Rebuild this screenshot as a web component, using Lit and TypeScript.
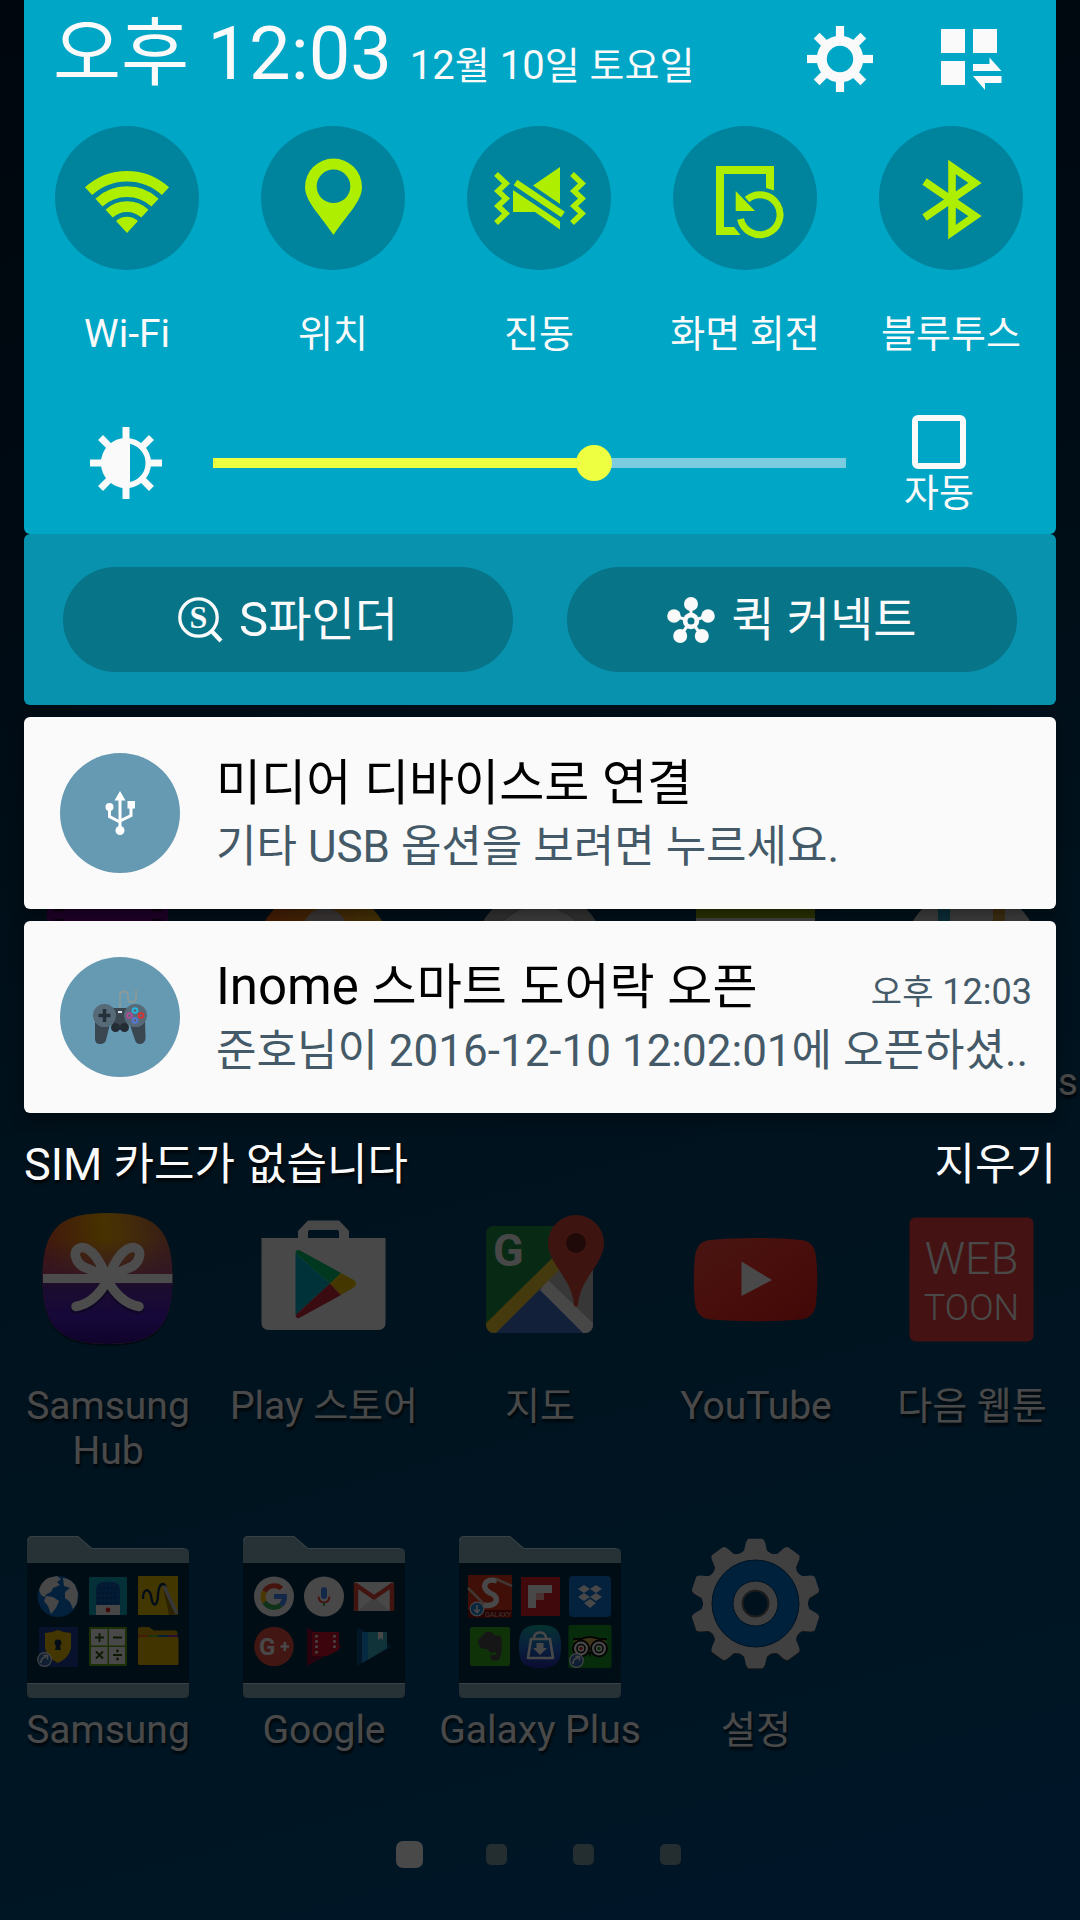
import { LitElement, html, svg, css } from "lit";
import type { SVGTemplateResult, TemplateResult } from "lit";
import { customElement, state } from "lit/decorators.js";
import { styleMap } from "lit/directives/style-map.js";

/** Wraps each Hangul run so it can be sized apart from the Latin text. */
const mixed = (text: string) =>
  text.split(/([가-힣]+)/).filter(Boolean).map((part) =>
    /[가-힣]/.test(part) ? html`<span class="ko">${part}</span>` : part
  );

const LIME = "#aeee00";

/* ---------- quick settings ---------- */

const fan = (r: number) =>
  `M${72 - 0.677 * r} ${107 - 0.736 * r}A${r} ${r} 0 0 1 ${72 + 0.677 * r} ${107 - 0.736 * r}`;

const wifiIcon = svg`
  <g fill="none" stroke=${LIME} stroke-width="10.6">
    <path d=${fan(56.8)} /><path d=${fan(41.4)} /><path d=${fan(26.4)} />
  </g>
  <path fill=${LIME} d="M72 107L61 95A16.3 16.3 0 0 1 83 95Z" />`;

const pinIcon = svg`
  <path fill=${LIME} fill-rule="evenodd"
    d="M72.500 109C61 91 44 76 44 61A28.500 28.500 0 0 1 101 61C101 76 84 91 72.500 109ZM72.500 43.500A16.800 16.800 0 1 0 72.500 77.100A16.800 16.800 0 1 0 72.500 43.500Z" />`;

const vibrateIcon = svg`
  <g fill="none" stroke=${LIME} stroke-width="5.500">
    <path d="M29 48L39 57.500L31 65L39 72.500L31 80L39 87.500L29 97" />
    <path d="M105 48L115 57.500L107 65L115 72.500L107 80L115 87.500L105 97" />
    <path d="M48.500 56.500L96 88.500" stroke-width="6.500" />
  </g>
  <path fill=${LIME} d="M93 41V78L66 59.500ZM46 64V86H68L93 103.500V95.500Z" />`;

const rotateIcon = svg`
  <path fill=${LIME} d="M43 40H101V64.500L93 62V48H51V101H61L67.500 109H43ZM62.700 65V85H82Z" />
  <path fill="none" stroke=${LIME} stroke-width="7" d="M74 73.500A20 20 0 1 1 67.500 93" />`;

const bluetoothIcon = svg`
  <path fill="none" stroke=${LIME} stroke-width="7.600"
    d="M45.500 55.500L96 90L73 106V41L96 57L45.500 91.500" />`;

/* ---------- launcher icons, 162 x 162 ---------- */

const gearPath = (() => {
  const at = (r: number, deg: number) => {
    const a = ((deg - 90) * Math.PI) / 180;
    return `${(80.5 + r * Math.cos(a)).toFixed(1)} ${(67.5 + r * Math.sin(a)).toFixed(1)}`;
  };
  const pts: string[] = [];
  for (let k = 0; k < 10; k++) {
    const a = k * 36;
    pts.push(at(51, a - 16), at(53, a - 11), at(61.5, a - 7.5), at(63.5, a - 6));
    pts.push(at(63.5, a + 6), at(61.5, a + 7.5), at(53, a + 11), at(51, a + 16));
  }
  return `M${pts.join("L")}Z`;
})();

const squircle = "M80.500 1C128 1 145.500 16 145.500 66.500C145.500 116 128 132 80.500 132C33 132 15.500 116 15.500 66.500C15.500 16 33 1 80.500 1Z";

const hubIcon = svg`
  <defs>
    <linearGradient id="hubTop" x1="0" x2="1" y1="0.100" y2="0">
      <stop offset="0" stop-color="#d8502c" /><stop offset="0.450" stop-color="#f0a400" />
      <stop offset="0.600" stop-color="#e89a18" /><stop offset="1" stop-color="#b45c50" />
    </linearGradient>
    <linearGradient id="hubFade" x1="0" x2="0" y1="0" y2="1">
      <stop offset="0.200" stop-color="#a03ca0" stop-opacity="0" /><stop offset="0.470" stop-color="#a04088" stop-opacity="0.750" />
      <stop offset="0.550" stop-color="#5c2c98" /><stop offset="0.800" stop-color="#4a1cc0" /><stop offset="1" stop-color="#340c90" />
    </linearGradient>
  </defs>
  <path d=${squircle} fill="#001020" opacity="0.600" transform="translate(0 2)" />
  <path d=${squircle} fill="url(#hubTop)" /><path d=${squircle} fill="url(#hubFade)" />
  <path d="M16 62H145.300V71H16Z" fill="#fff" />
  <g fill="none" stroke-linecap="round" stroke-linejoin="round">
    <g stroke="#20104c" stroke-opacity="0.500" stroke-width="11" transform="translate(0 2)">
      <path d="M80.500 68C72 84 62 92 49 94.500" /><path d="M80.500 68C89 84 99 92 112 94.500" />
    </g>
    <g stroke="#fff" stroke-width="9.500">
      <path d="M80.500 68C74 50 64 34 54 35.500C44 38 49 50 55 54C64 59 74 60 80.500 68Z" />
      <path d="M80.500 68C87 50 97 34 107 35.500C117 38 112 50 106 54C97 59 87 60 80.500 68Z" />
      <path d="M80.500 68C72 84 62 92 49 94.500" /><path d="M80.500 68C89 84 99 92 112 94.500" />
    </g>
  </g>`;

const playIcon = svg`
  <path fill="#f2f2f2" fill-rule="evenodd"
    d="M55 26V19L65 8.500H96L106 19V26H142.500V111Q142.500 118 135 118H26Q18.500 118 18.500 111V26ZM65 26H96V20Q96 18 94 18H67Q65 18 65 20Z" />
  <path fill="#00a9c4" d="M52.500 41V103L87 71.500Z" />
  <path fill="#00b868" d="M52.500 41Q53 36 58 39L98 61L87 71.500Z" />
  <path fill="#c22a3c" d="M52.500 103Q53 108 58 105L98 83L87 71.500Z" />
  <path fill="#e8b800" d="M98 61L110 67.500Q116 71.500 110 76L98 83L87 71.500Z" />`;

const mapsIcon = svg`
  <defs><clipPath id="mapClip"><rect x="27" y="14" width="107" height="107" rx="8" /></clipPath></defs>
  <g clip-path="url(#mapClip)">
    <rect x="27" y="14" width="107" height="107" fill="#1c8c48" />
    <path d="M81 64L134 14V121H81Z" fill="#b8b8b8" />
    <path d="M81 74L130 121H30Z" fill="#3f6cc4" />
    <path d="M81 78L89 68L140 117L128 125Z" fill="#eee" />
    <path d="M20 118L124 16L132 26L34 124Z" fill="#e8c030" />
    <path d="M27 14H110L27 96Z" fill="#1c8c48" />
    <path d="M27 96L110 14H122L27 109Z" fill="#1c8c48" />
  </g>
  <text class="glyph" x="34" y="54" font-size="45" font-weight="700" fill="#eee">G</text>
  <path fill="#d0453a" d="M117 3A28 28 0 0 1 145 31C145 52 121 66 119 93Q117 97 115 93C113 66 89 52 89 31A28 28 0 0 1 117 3Z" />
  <circle cx="117" cy="31" r="10" fill="#6c2420" />`;

const youtubeIcon = svg`
  <defs><linearGradient id="yt" x1="0" y1="0" x2="1" y2="1">
    <stop offset="0" stop-color="#f0483c" /><stop offset="0.500" stop-color="#f03028" /><stop offset="1" stop-color="#d81c18" />
  </linearGradient></defs>
  <path fill="url(#yt)" d="M80.500 26Q108 26 126 28Q139 29 141 44Q143.500 68 141 92Q139 106 126 107.500Q80 111 35 107.500Q22 106 20 92Q17.500 68 20 44Q22 29 35 28Q53 26 80.500 26Z" />
  <path fill="#f4f4f4" d="M66.500 49.500V84L97 68Z" />`;

const webtoonIcon = svg`
  <rect x="18.500" y="5.500" width="124" height="124" rx="6" fill="#e33c3c" />
  <text class="glyph" x="80.500" y="62" font-size="45" font-weight="300" text-anchor="middle" fill="#f4f4f4">WEB</text>
  <text class="glyph" x="80.500" y="108" font-size="36" font-weight="300" text-anchor="middle" fill="#f4f4f4">TOON</text>`;

const settingsIcon = svg`
  <path d=${gearPath} fill="#555" stroke="#555" stroke-width="3" stroke-linejoin="round" transform="translate(0 1)" />
  <path d=${gearPath} fill="#d8d8d8" stroke="#d8d8d8" stroke-width="3" stroke-linejoin="round" />
  <circle cx="80.500" cy="67.500" r="43.500" fill="#0070c8" stroke="#003c70" />
  <circle cx="80.500" cy="67.500" r="22.500" fill="#d8d8d8" stroke="#003c70" />
  <circle cx="80.500" cy="67.500" r="13" fill="#003a66" stroke="#666" stroke-width="2" />`;

const folder = (inner: SVGTemplateResult) => svg`
  <path d="M0 27H162V147H0Z" fill="#001014" fill-opacity="0.450" />
  <path d="M0 27V5Q0 0 5 0H51L65 12H157Q162 12 162 17V27Z" fill="#82a8b8" />
  <path d="M0 148H162V157Q162 162 157 162H5Q0 162 0 157Z" fill="#82a8b8" />
  <path d="M1 5Q1 0.500 5 0.500H51L65 12.500H157M0 147.500H162" fill="none" stroke="#c0d8e0" />
  ${inner}`;

const badge = (x: number, y: number, color: string) => svg`
  <circle cx=${x} cy=${y} r="6.800" fill=${color} stroke="#e8e8e8" stroke-width="1.200" />`;

const samsungFolder = folder(svg`
  <circle cx="31" cy="60.500" r="20.500" fill="#0a70c8" />
  <g fill="#eee">
    <path d="M12 54Q14 46 21 42L30 40L34 43L30 46L33 49L26 52L24 56L20 58L17 61L14 59Z" />
    <path d="M19 60L26 61L32 65L29 72L24 78L21 70L17 65Z" />
    <path d="M36 42Q44 43 48 49L51 57L50 67L46 73L43 66L38 62L38 56L43 52L37 50Z" />
  </g>
  <rect x="62" y="41" width="38" height="38" rx="1" fill="#10a0b8" />
  <path d="M69 69V54Q69 46 77 46H85Q93 46 93 54V69Z" fill="#0a5cb0" />
  <path d="M72 52H90M71 57H91M71 62H91M71 67H91" stroke="#063c78" stroke-width="1.500" stroke-dasharray="2 2" />
  <rect x="69" y="69" width="24" height="10" fill="#eee" /><circle cx="81" cy="74" r="2.400" fill="#e02020" />
  <rect x="111" y="40" width="40" height="39" fill="#e0b800" />
  <path d="M136 52L151 79H142Z" fill="#907400" />
  <path d="M116 63C116 52 122 52 124 60C126 74 131 69 131 58C132 48 136 45 139 51" fill="none" stroke="#0c2c50" stroke-width="2.400" />
  <path d="M137 50L150 78" stroke="#b8b8b8" stroke-width="3.500" />
  <rect x="12" y="91" width="39" height="40" fill="#1c3c98" />
  <path d="M18 97Q25 97 31 94Q37 97 44 97V112Q42 122 31 127Q20 122 18 112Z" fill="#e0b400" />
  <circle cx="31" cy="107" r="3.400" fill="#0c2c50" /><path d="M29.500 108H32.500L34 114H28Z" fill="#0c2c50" />
  ${badge(17.5, 123.5, "#2f68b0")}
  <path d="M14 127Q14 121 19 121M16.500 119.500H20.500V123.500" fill="none" stroke="#eee" stroke-width="1.600" />
  <rect x="62" y="91" width="38" height="39" rx="1" fill="#5ca010" />
  <path d="M64 93H80.500V109.500H64ZM82 93H98V109.500H82ZM64 111H80.500V128H64ZM82 111H98V128H82Z" fill="#f0f0f0" />
  <path d="M68 101.500H77M72.500 97V106M86 101.500H95M69 115.500L76 122.500M76 115.500L69 122.500M86 119H95" stroke="#285008" stroke-width="1.800" />
  <circle cx="90.500" cy="115" r="1.400" fill="#285008" /><circle cx="90.500" cy="123" r="1.400" fill="#285008" />
  <path d="M111 101V93Q111 91 113 91H122L127 94.500H148Q150.500 94.500 150.500 97V101Z" fill="#c89c00" />
  <path d="M111 100H121" stroke="#e86020" stroke-width="2" /><path d="M121 100H131" stroke="#60b020" stroke-width="2" />
  <path d="M131 100H141" stroke="#1070c0" stroke-width="2" /><path d="M141 100H151" stroke="#8030a0" stroke-width="2" />
  <rect x="111" y="101" width="40.500" height="28" rx="1.500" fill="#dcae00" />`);

const googleFolder = folder(svg`
  <circle cx="31" cy="60.500" r="20" fill="#f0f0f0" />
  <g fill="none" stroke-width="5">
    <path d="M38.500 52.500A11 11 0 0 0 21.500 55.500" stroke="#ea4335" />
    <path d="M21.500 55.500A11 11 0 0 0 21.500 66" stroke="#fbbc05" />
    <path d="M21.500 66A11 11 0 0 0 38 69" stroke="#34a853" />
    <path d="M38 69A11 11 0 0 0 41.500 60.500H31" stroke="#4285f4" />
  </g>
  <circle cx="81" cy="60.500" r="20" fill="#f0f0f0" />
  <rect x="78" y="51" width="6" height="12" rx="3" fill="#4285f4" />
  <path d="M75.500 60.500Q76 66.500 81 66.500Q86 66.500 86.500 60.500" fill="none" stroke="#ea4335" stroke-width="2" />
  <path d="M81 66.500V70" stroke="#34a853" stroke-width="2" />
  <rect x="111" y="46" width="40" height="29" rx="2" fill="#f0f0f0" />
  <path d="M115 75L131 61L147 75Z" fill="#d8d8d8" />
  <path d="M113 75V49L131 61.500L149 49V75" fill="none" stroke="#dc4437" stroke-width="4.500" stroke-linejoin="round" />
  <circle cx="31" cy="110.500" r="19.800" fill="#dc4a3c" />
  <text class="glyph" x="16" y="119" font-size="24" font-weight="700" fill="#f0f0f0">G</text>
  <path d="M37.500 110.500H46M41.800 106V115" stroke="#f0f0f0" stroke-width="2.600" />
  <path d="M64 91.500L99.500 110.500L64 130Z" fill="#800c34" />
  <path d="M69 96H96V114L84 120H69Z" fill="#c8102c" />
  <path d="M73.500 99V118M91.500 99V115" stroke="#f0f0f0" stroke-width="2.500" stroke-dasharray="2.500 2.800" />
  <path d="M114 91.500L149 110.500L114 130Z" fill="#0c4c80" />
  <path d="M119 96H144V112L119 127Z" fill="#1490d8" /><path d="M125 96H144V112L125 123.500Z" fill="#38a8c0" />
  <path d="M135 96H140V104L137.500 102L135 104Z" fill="#f0f0f0" />`);

const galaxyFolder = folder(svg`
  <defs><linearGradient id="bag" x1="0" x2="0" y1="0" y2="1">
    <stop offset="0" stop-color="#18a8a0" /><stop offset="0.500" stop-color="#1c6cd0" /><stop offset="1" stop-color="#2828a8" />
  </linearGradient></defs>
  <rect x="9" y="39" width="44" height="43" fill="#d83418" /><rect x="9" y="74" width="44" height="8" fill="#80100c" />
  <path d="M38 45C26 41 21 52 31 57C42 61 38 72 24 69" fill="none" stroke="#f0f0f0" stroke-width="5.500" />
  <path d="M9 52L24 67M37 43L53 50" stroke="#d8b8a8" stroke-width="2.500" />
  <text class="glyph" x="26" y="80.500" font-size="7" fill="#e0b0a0">GALAXY</text>
  ${badge(18, 73, "#1c80d0")}
  <path d="M18 69V76M15 73.500L18 76.500L21 73.500" fill="none" stroke="#eee" stroke-width="1.600" />
  <rect x="62" y="41" width="39" height="39" fill="#d82428" />
  <path d="M69 49H93V57H85V64H77V72H69Z" fill="#f0f0f0" /><path d="M77 57H85V64H77Z" fill="#f0a8a8" />
  <rect x="110" y="40" width="42" height="41" rx="4" fill="#1070d0" />
  <path fill="#f0f0f0" d="M119 53L125 49L131 53L125 57ZM131 53L137 49L143 53L137 57ZM119 61L125 57L131 61L125 65ZM131 61L137 57L143 61L137 65ZM125 67L131 63L137 67L131 72Z" />
  <rect x="11" y="91" width="40" height="39" rx="2" fill="#38a81c" />
  <path fill="#484c48" d="M19 104L27 96Q33 95 35 99L42 100Q44 112 41 122Q39 126 33 124Q30 122 32 119L37 119V116L31 117Q29 112 26 113Q19 113 19 104Z" />
  <path d="M81 89C97 89 102 94 102 110.500C102 127 97 132 81 132C65 132 60 127 60 110.500C60 94 65 89 81 89Z" fill="url(#bag)" />
  <path d="M72 103H91L94 122H69Z" fill="none" stroke="#f0f0f0" stroke-width="2.600" stroke-linejoin="round" />
  <path d="M75 103Q75 96.500 81 96.500Q87 96.500 87 103" fill="none" stroke="#f0f0f0" stroke-width="2.400" />
  <path d="M77.500 107H84.500V112H88L81 119L74 112H77.500Z" fill="#f0f0f0" />
  <rect x="109.500" y="89" width="43" height="43" rx="2" fill="#189428" />
  <path d="M114 106Q131 95 148 106L131 116Z" fill="#d8b050" />
  <path d="M114 103L122 103Q131 99 140 103L148 103" fill="none" stroke="#101010" stroke-width="2" />
  <g fill="#f0f0f0" stroke="#101010" stroke-width="2"><circle cx="122" cy="112.500" r="8" /><circle cx="140" cy="112.500" r="8" /></g>
  <g fill="none" stroke="#101010" stroke-width="1.600"><circle cx="122" cy="112.500" r="4" /><circle cx="140" cy="112.500" r="4" /></g>
  <circle cx="122" cy="112.500" r="1.800" fill="#d02020" /><circle cx="140" cy="112.500" r="1.800" fill="#189428" />
  <path d="M129 116L131 121L133 116Z" fill="#101010" />
  ${badge(117.5, 124.5, "#2f68b0")}
  <path d="M114 128Q114 122 119 122M116.500 120.500H120.500V124.500" fill="none" stroke="#eee" stroke-width="1.600" />`);

const videoIcon = svg`
  <rect x="20" y="8" width="121" height="118" fill="#700090" />
  <path d="M27 22H37M27 32H37M125 22H135M125 32H135" stroke="#300040" stroke-width="3" />`;
const swirlIcon = svg`
  <defs><linearGradient id="swirl" x1="0" x2="1"><stop offset="0" stop-color="#f06018" /><stop offset="1" stop-color="#f0b818" /></linearGradient></defs>
  <circle cx="80.500" cy="67.500" r="68" fill="url(#swirl)" /><circle cx="82" cy="42" r="22" fill="#c8c0b8" />`;
const clockIcon = svg`
  <circle cx="80.500" cy="67.500" r="66" fill="#b0b0b0" /><circle cx="80.500" cy="67.500" r="50" fill="#d8d8d8" stroke="#909090" />`;
const memoIcon = svg`
  <rect x="21" y="8" width="119" height="110" fill="#e8e8e8" /><rect x="21" y="8" width="119" height="22" fill="#98b000" />`;
const appsIcon = svg`
  <defs><clipPath id="appsClip"><circle cx="80.500" cy="67.500" r="68" /></clipPath></defs>
  <g clip-path="url(#appsClip)"><rect width="162" height="140" fill="#d8d8d8" />
  <path d="M53 0V140" stroke="#30a0c8" stroke-width="12" /><path d="M108 0V140" stroke="#d8a040" stroke-width="12" /></g>`;

/* ---------- data ---------- */

interface Toggle { label: string; icon: SVGTemplateResult; on: boolean }
interface Shortcut { label: string; icon: SVGTemplateResult; fit?: "wrap" | "edge" }

const shortcuts: Shortcut[] = [
  { label: "", icon: videoIcon },
  { label: "", icon: swirlIcon },
  { label: "", icon: clockIcon },
  { label: "", icon: memoIcon },
  { label: "s", icon: appsIcon, fit: "edge" },
  { label: "Samsung Hub", icon: hubIcon, fit: "wrap" },
  { label: "Play 스토어", icon: playIcon },
  { label: "지도", icon: mapsIcon },
  { label: "YouTube", icon: youtubeIcon },
  { label: "다음 웹툰", icon: webtoonIcon },
  { label: "Samsung", icon: samsungFolder },
  { label: "Google", icon: googleFolder },
  { label: "Galaxy Plus", icon: galaxyFolder },
  { label: "설정", icon: settingsIcon },
];

const rays = (r: number, angles: number[]) =>
  angles.map((a) => svg`<path d="M0 -20V${-r}" transform="rotate(${a})" />`);

const usbArt = svg`
  <g fill="none" stroke="#fff" stroke-width="3">
    <path d="M60 44V76" /><path d="M49.500 56V63.500L60 69" /><path d="M71 54V62.500L60 68" />
  </g>
  <path fill="#fff" d="M60 38L65.500 47.500H54.500ZM67.500 48H75V55.500H67.500Z" />
  <circle cx="49.500" cy="54" r="4" fill="#fff" /><circle cx="60" cy="77.500" r="4.500" fill="#fff" />`;

const padArt = svg`
  <path d="M60 51V38Q60 34.500 64 34.500Q68 34.500 68 39V41Q68 45 72 45Q76 45 76 41V33" fill="none" stroke="#8a9a98" stroke-width="1.800" />
  <path d="M53 51H67V73H53ZM35 64H50L49 71L46 83Q45 87 40 87Q35 87 35 82ZM85 64H69L71 71L75 83Q76 87 80 87Q86 86 85.500 80Z" fill="#3a4650" />
  <circle cx="44.500" cy="58.500" r="11.500" fill="#566a78" /><circle cx="75.500" cy="58.500" r="11.500" fill="#566a78" />
  <path d="M38.500 58.500H50.500M44.500 52V65" stroke="#26303a" stroke-width="3.500" />
  <circle cx="55.500" cy="70.500" r="4.500" fill="#242c34" /><circle cx="64.500" cy="70.500" r="4.500" fill="#242c34" />
  <rect x="58" y="54" width="4" height="2" fill="#dde" />
  <g fill="none" stroke-width="1.800">
    <circle cx="75" cy="53.500" r="2.400" stroke="#28b8e0" /><circle cx="69.500" cy="58.500" r="2.400" stroke="#b84898" />
    <circle cx="81" cy="58.500" r="2.400" stroke="#e03030" /><circle cx="75" cy="63.500" r="2.400" stroke="#5878d8" />
  </g>`;

@customElement("home-screen")
export class HomeScreen extends LitElement {
  static styles = css`
    :host {
      display: flex;
      flex-direction: column;
      padding: 888px 0 52px;
      box-sizing: border-box;
      font-family: Roboto, "Noto Sans CJK KR", sans-serif;
      color: #f4f4f4;
    }
    .apps {
      display: grid;
      grid-template-columns: repeat(5, 1fr);
      grid-auto-rows: 262px;
      row-gap: 62px;
    }
    .app {
      display: flex;
      flex-direction: column;
      align-items: center;
      gap: 10px;
      padding: 0;
      border: 0;
      background: none;
      color: inherit;
      font: inherit;
    }
    .art { width: 162px; height: 162px; flex: none; overflow: visible; }
    .glyph { font-family: Roboto, sans-serif; }
    .name {
      font-size: 39px;
      line-height: 45px;
      text-align: center;
      white-space: nowrap;
      text-shadow: 1px 3px 3px rgba(0, 0, 0, 0.8);
    }
    .name.wrap { max-width: 180px; white-space: normal; }
    .name.edge { align-self: flex-end; padding-right: 2px; }
    .ko { font-size: 38px; line-height: 0; }
    .pages {
      display: grid;
      grid-template-columns: repeat(4, 87px);
      justify-content: center;
      place-items: center;
      height: 27px;
      margin-top: 43px;
    }
    .page { width: 21px; height: 21px; border-radius: 5px; background: #7896a2; padding: 0; border: 0; }
    .page.current { width: 27px; height: 27px; border-radius: 7px; background: #f4f4f4; }
  `;

  render(): TemplateResult {
    return html`
      <nav class="apps">
        ${shortcuts.map(
          (s) => html`<button class="app" type="button">
            <svg class="art" viewBox="0 0 162 162" aria-hidden="true">${s.icon}</svg>
            <span class="name ${s.fit ?? ""}">${mixed(s.label)}</span>
          </button>`
        )}
      </nav>
      <div class="pages">
        ${[1, 2, 3, 4].map(
          (n) => html`<button type="button" class="page ${n === 1 ? "current" : ""}" aria-label="${n}"></button>`
        )}
      </div>
    `;
  }
}

@customElement("app-root")
export class AppRoot extends LitElement {
  @state() private toggles: Toggle[] = [
    { label: "Wi-Fi", icon: wifiIcon, on: true },
    { label: "위치", icon: pinIcon, on: true },
    { label: "진동", icon: vibrateIcon, on: true },
    { label: "화면 회전", icon: rotateIcon, on: true },
    { label: "블루투스", icon: bluetoothIcon, on: true },
  ];
  @state() private brightness = 155;

  static styles = css`
    :host {
      display: grid;
      min-height: 100vh;
      overflow: hidden;
      background: linear-gradient(165deg, #00162c 0%, #002440 25%, #003c60 52%, #004670 75%, #004a7c 88%, #004888 100%);
      font-family: Roboto, "Noto Sans CJK KR", sans-serif;
      color: #fafafa;
    }
    home-screen, .shade { grid-area: 1 / 1; }
    button { border: 0; padding: 0; background: none; color: inherit; font: inherit; }
    svg { display: block; flex: none; }
    .ko { font-size: var(--ko); line-height: 0; }
    .shade {
      position: relative;
      padding: 0 24px;
      background: rgba(0, 0, 0, 0.7);
    }
    .quick {
      background: #00a6c6;
      border-radius: 0 0 6px 6px;
      padding-bottom: 23px;
    }
    .head {
      display: flex;
      align-items: baseline;
      height: 117px;
      padding: 9px 54px 0 29px;
      white-space: nowrap;
    }
    .clock { font-size: 74px; line-height: 90px; --ko: 74px; }
    .date { font-size: 40px; line-height: 90px; --ko: 38px; margin-left: 18px; }
    .tools { display: flex; align-items: center; align-self: flex-start; gap: 68px; height: 100px; margin-left: auto; }
    .toggles { display: grid; grid-template-columns: repeat(5, 1fr); padding-right: 2px; }
    .toggle {
      display: flex;
      flex-direction: column;
      align-items: center;
      gap: 40px;
      font-size: 39px;
      line-height: 48px;
      --ko: 38px;
    }
    .disc { border-radius: 50%; background: #00839d; }
    .bright {
      display: flex;
      align-items: center;
      padding: 57px 83px 0 66px;
      height: 96px;
    }
    .slider {
      appearance: none;
      flex: 1;
      min-width: 0;
      height: 36px;
      margin: 0 59px 0 51px;
      background: none;
    }
    .slider::-webkit-slider-runnable-track {
      height: 10px;
      background: linear-gradient(to right, #eeff41 var(--fill), #7accde var(--fill));
    }
    .slider::-webkit-slider-thumb {
      appearance: none;
      width: 36px;
      height: 36px;
      margin-top: -13px;
      border-radius: 50%;
      background: #eeff41;
    }
    .auto {
      display: flex;
      flex-direction: column;
      align-items: center;
      width: 68px;
      padding-top: 5px;
      font-size: 39px;
      line-height: 48px;
      white-space: nowrap;
      --ko: 38px;
    }
    .tick {
      appearance: none;
      box-sizing: border-box;
      width: 54px;
      height: 54px;
      margin: 0;
      border: 6px solid #fafafa;
      border-radius: 6px;
    }
    .search {
      display: grid;
      grid-template-columns: 1fr 1fr;
      gap: 54px;
      padding: 33px 39px;
      border-radius: 6px;
      background: #0892ad;
    }
    .pill {
      display: flex;
      align-items: center;
      justify-content: center;
      gap: 16px;
      height: 105px;
      border-radius: 53px;
      background: #077488;
      font-size: 49px;
      line-height: 60px;
      --ko: 47px;
    }
    .serif { font-family: "Liberation Serif", serif; }
    .card {
      display: flex;
      align-items: flex-start;
      gap: 36px;
      margin-top: 12px;
      padding: 36px 24px 32px 36px;
      border-radius: 6px;
      background: #fafafa;
      color: #455a68;
      box-shadow: 0 6px 14px rgba(0, 0, 0, 0.4);
    }
    .round { border-radius: 50%; background: #6699b2; }
    .body { display: flex; flex-direction: column; gap: 4px; flex: 1; min-width: 0; white-space: nowrap; }
    .line { display: flex; justify-content: space-between; align-items: baseline; }
    .title { margin: 0; font-size: 51px; line-height: 60px; font-weight: 400; color: #000; --ko: 49px; }
    .when { font-size: 36px; line-height: 48px; --ko: 34px; }
    .text { margin: 0; font-size: 44px; line-height: 60px; --ko: 44px; }
    .foot {
      display: flex;
      justify-content: space-between;
      padding-top: 22px;
      font-size: 45px;
      line-height: 60px;
      --ko: 44px;
      text-shadow: 1px 3px 3px rgba(0, 0, 0, 0.8);
    }
  `;

  private flip(index: number) {
    this.toggles = this.toggles.map((t, i) => (i === index ? { ...t, on: !t.on } : t));
  }

  private slide(e: Event) {
    this.brightness = Number((e.target as HTMLInputElement).value);
  }

  render(): TemplateResult {
    return html`
      <home-screen></home-screen>
      <main class="shade">
        <section class="quick">
          <header class="head">
            <span class="clock">${mixed("오후 12:03")}</span>
            <span class="date">${mixed("12월 10일 토요일")}</span>
            <span class="tools">
              <button type="button" aria-label="설정">
                <svg width="66" height="66" viewBox="-33 -33 66 66">
                  <circle r="18.200" fill="none" stroke="#fafafa" stroke-width="10" />
                  <g stroke="#fafafa" stroke-width="8.200">${rays(33, [0, 45, 90, 135, 180, 225, 270, 315])}</g>
                </svg>
              </button>
              <button type="button" aria-label="편집">
                <svg width="61" height="61" viewBox="0 0 61 61">
                  <path fill="#fafafa" d="M0 0H24V24H0ZM32 0H56V24H32ZM0 32H24V56H0ZM32 35H48.500V28.500L60.500 42H32ZM32 47H60.500V54H44V61Z" />
                </svg>
              </button>
            </span>
          </header>
          <div class="toggles">
            ${this.toggles.map(
              (t, i) => html`<button class="toggle" type="button" aria-pressed=${t.on} @click=${() => this.flip(i)}>
                <svg class="disc" width="144" height="144" viewBox="0 0 144 144" aria-hidden="true">${t.icon}</svg>
                <span>${mixed(t.label)}</span>
              </button>`
            )}
          </div>
          <div class="bright">
            <svg width="72" height="72" viewBox="-36 -36 72 72" aria-hidden="true">
              <circle r="22.300" fill="none" stroke="#fafafa" stroke-width="5.500" />
              <path d="M4 -22A22.300 22.300 0 1 0 4 22Z" fill="#fafafa" />
              <g stroke="#fafafa" stroke-width="7">${rays(36, [0, 45, 90, 135, 180, 225, 270, 315])}</g>
            </svg>
            <input
              class="slider"
              type="range"
              min="0"
              max="255"
              aria-label="밝기"
              .value=${String(this.brightness)}
              style=${styleMap({ "--fill": `${(this.brightness / 255) * 100}%` })}
              @input=${this.slide}
            />
            <label class="auto"><input class="tick" type="checkbox" /><span>${mixed("자동")}</span></label>
          </div>
        </section>
        <section class="search">
          <button class="pill" type="button">
            <svg width="45" height="46" viewBox="0 0 45 46" aria-hidden="true">
              <circle cx="20.500" cy="20.500" r="18.700" fill="none" stroke="#fafafa" stroke-width="3.300" />
              <path d="M33.500 34L43 44" stroke="#fafafa" stroke-width="4.200" />
              <text class="serif" x="20.500" y="31" font-size="32" font-weight="700" text-anchor="middle" fill="#fafafa">S</text>
            </svg>
            <span>${mixed("S파인더")}</span>
          </button>
          <button class="pill" type="button">
            <svg width="48" height="46" viewBox="0 0 48 46" aria-hidden="true">
              <path d="M24 24V7M24 24L7 19M24 24L41 19M24 24L13 39M24 24L35 39" stroke="#fafafa" stroke-width="3" />
              <g fill="#fafafa">
                <circle cx="24" cy="7" r="7" /><circle cx="7" cy="19" r="6.800" /><circle cx="41" cy="19" r="6.800" />
                <circle cx="13.200" cy="39" r="7" /><circle cx="34.800" cy="39" r="7" /><circle cx="24" cy="24" r="8.200" />
              </g>
              <circle cx="24" cy="24" r="3.500" fill="#077488" />
            </svg>
            <span>${mixed("퀵 커넥트")}</span>
          </button>
        </section>
        <article class="card">
          <svg class="round" width="120" height="120" viewBox="0 0 120 120" aria-hidden="true">${usbArt}</svg>
          <div class="body">
            <h2 class="title">${mixed("미디어 디바이스로 연결")}</h2>
            <p class="text">${mixed("기타 USB 옵션을 보려면 누르세요.")}</p>
          </div>
        </article>
        <article class="card">
          <svg class="round" width="120" height="120" viewBox="0 0 120 120" aria-hidden="true">${padArt}</svg>
          <div class="body">
            <div class="line">
              <h2 class="title">${mixed("Inome 스마트 도어락 오픈")}</h2>
              <time class="when">${mixed("오후 12:03")}</time>
            </div>
            <p class="text">${mixed("준호님이 2016-12-10 12:02:01에 오픈하셨..")}</p>
          </div>
        </article>
        <footer class="foot">
          <span>${mixed("SIM 카드가 없습니다")}</span>
          <button type="button">${mixed("지우기")}</button>
        </footer>
      </main>
    `;
  }
}
